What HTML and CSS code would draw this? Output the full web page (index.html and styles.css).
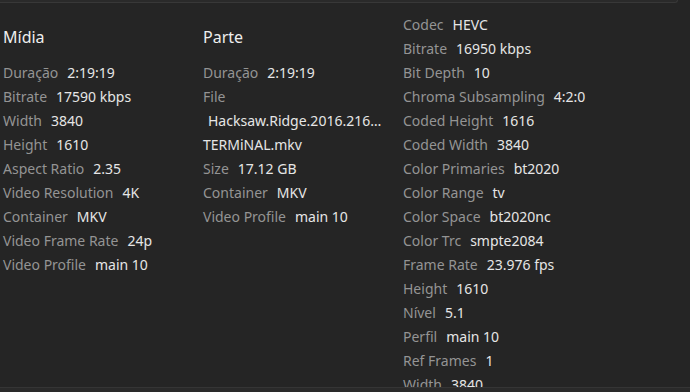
FILE: index.html
```html
<!DOCTYPE html>
<html lang="pt">
<head>
    <meta charset="UTF-8">
    <meta name="viewport" content="width=device-width, initial-scale=1.0">
    <title>Informações de mídia</title>
    <link rel="stylesheet" href="styles.css">
</head>
<body>

    <div class="top-bar"></div>

    <div class="media-info">
        <div class="stream">
            <h3 class="stream-title">Mídia</h3>
            <div class="info-row"><span class="label">Duração</span><span class="value">2:19:19</span></div>
            <div class="info-row"><span class="label">Bitrate</span><span class="value">17590 kbps</span></div>
            <div class="info-row"><span class="label">Width</span><span class="value">3840</span></div>
            <div class="info-row"><span class="label">Height</span><span class="value">1610</span></div>
            <div class="info-row"><span class="label">Aspect Ratio</span><span class="value">2.35</span></div>
            <div class="info-row"><span class="label">Video Resolution</span><span class="value">4K</span></div>
            <div class="info-row"><span class="label">Container</span><span class="value">MKV</span></div>
            <div class="info-row"><span class="label">Video Frame Rate</span><span class="value">24p</span></div>
            <div class="info-row"><span class="label">Video Profile</span><span class="value">main 10</span></div>
        </div>

        <div class="stream">
            <h3 class="stream-title">Parte</h3>
            <div class="info-row"><span class="label">Duração</span><span class="value">2:19:19</span></div>
            <div class="info-row"><span class="label">File</span></div>
            <div class="info-row file-name"><span class="value">Hacksaw.Ridge.2016.2160p.UHD.BluRay.x265-</span></div>
            <div class="info-row"><span class="value">TERMiNAL.mkv</span></div>
            <div class="info-row"><span class="label">Size</span><span class="value">17.12 GB</span></div>
            <div class="info-row"><span class="label">Container</span><span class="value">MKV</span></div>
            <div class="info-row"><span class="label">Video Profile</span><span class="value">main 10</span></div>
        </div>

        <div class="stream stream-video">
            <div class="info-row"><span class="label">Codec</span><span class="value">HEVC</span></div>
            <div class="info-row"><span class="label">Bitrate</span><span class="value">16950 kbps</span></div>
            <div class="info-row"><span class="label">Bit Depth</span><span class="value">10</span></div>
            <div class="info-row"><span class="label">Chroma Subsampling</span><span class="value">4:2:0</span></div>
            <div class="info-row"><span class="label">Coded Height</span><span class="value">1616</span></div>
            <div class="info-row"><span class="label">Coded Width</span><span class="value">3840</span></div>
            <div class="info-row"><span class="label">Color Primaries</span><span class="value">bt2020</span></div>
            <div class="info-row"><span class="label">Color Range</span><span class="value">tv</span></div>
            <div class="info-row"><span class="label">Color Space</span><span class="value">bt2020nc</span></div>
            <div class="info-row"><span class="label">Color Trc</span><span class="value">smpte2084</span></div>
            <div class="info-row"><span class="label">Frame Rate</span><span class="value">23.976 fps</span></div>
            <div class="info-row"><span class="label">Height</span><span class="value">1610</span></div>
            <div class="info-row"><span class="label">Nível</span><span class="value">5.1</span></div>
            <div class="info-row"><span class="label">Perfil</span><span class="value">main 10</span></div>
            <div class="info-row"><span class="label">Ref Frames</span><span class="value">1</span></div>
            <div class="info-row"><span class="label">Width</span><span class="value">3840</span></div>
        </div>
    </div>

    <div class="bottom-bar"></div>

</body>
</html>
```

FILE: styles.css
```css
body {
    font-family: 'Noto Sans', 'Open Sans', sans-serif;
    background-color: #252525;
    color: #e6e6e6;
    margin: 0;
    padding: 0;
    height: 392px;
    display: flex;
    flex-direction: column;
    overflow: hidden;
}

.top-bar {
    width: 677px;
    height: 2px;
    flex-shrink: 0;
    background-color: #2a2a2a;
    border-bottom: 1px solid #383838;
    border-right: 1px solid #383838;
    border-bottom-right-radius: 3px;
}

.media-info {
    flex: 1;
    display: flex;
    padding: 10px 0 0 3px;
    overflow: hidden;
}

.stream {
    width: 200px;
    flex-shrink: 0;
}

.stream-video {
    width: auto;
}

.stream-title {
    font-size: 16px;
    font-weight: normal;
    line-height: 26px;
    margin: 11px 0 11px 0;
    color: #eeeeee;
}

.info-row {
    font-size: 14px;
    line-height: 24px;
    white-space: nowrap;
}

.label {
    color: #949494;
    margin-right: 9px;
}

.value {
    color: #e6e6e6;
}

.file-name {
    width: 176px;
    padding-left: 5px;
    overflow: hidden;
    text-overflow: ellipsis;
}

.bottom-bar {
    height: 4px;
    flex-shrink: 0;
    background-color: #2a2a2a;
    border-top: 1px solid #353535;
}
```
